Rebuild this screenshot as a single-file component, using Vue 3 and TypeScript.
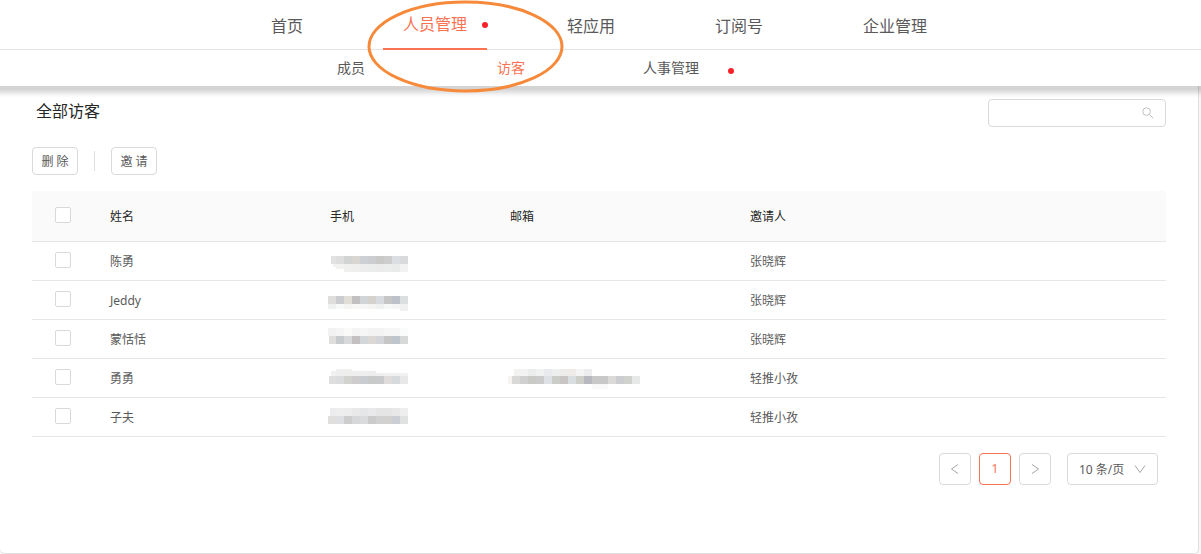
<script setup lang="ts">
import { computed, ref } from 'vue'

interface NavItem {
  label: string
  active?: boolean
  dot?: boolean
}

interface MosaicCell {
  x: number
  y: number
  width: number
  height: number
  color: string
}

interface Visitor {
  id: number
  name: string
  phone: MosaicCell[]
  email: MosaicCell[]
  inviter: string
}

const CELL = 8

const mainNav: NavItem[] = [
  { label: '首页' },
  { label: '人员管理', active: true, dot: true },
  { label: '轻应用' },
  { label: '订阅号' },
  { label: '企业管理' },
]

const subNav: NavItem[] = [
  { label: '成员' },
  { label: '访客', active: true },
  { label: '人事管理', dot: true },
]

// One row of mosaic cells; `inset` shortens the first cell from the left.
function strip(x: number, y: number, height: number, colors: string, inset = 0): MosaicCell[] {
  return colors.split(' ').map((c, i) => ({
    x: x + i * CELL + (i === 0 ? inset : 0),
    y,
    width: CELL - (i === 0 ? inset : 0),
    height,
    color: '#' + c,
  }))
}

const visitors: Visitor[] = [
  {
    id: 1,
    name: '陈勇',
    phone: [
      ...strip(14, 14, 8, 'e2e2e3 dededf d2d3d3 d9d6d1 cdd0d5 cbcdd0 c9c9c8 cdcdcd dbdfe4 d9dadb', 3),
      ...strip(14, 22, 3, 'f2f2f1', 5),
      ...strip(22, 22, 5, 'f2f2f1'),
      ...strip(30, 22, 8, 'f0f0ee efefed ededed ebecec ebebec ebecec e9eaea f2f2f3'),
    ],
    email: [],
    inviter: '张晓辉',
  },
  {
    id: 2,
    name: 'Jeddy',
    phone: [
      ...strip(14, 15, 8, 'dfdedd cacccf e1ded8 c3c0c2 d2d5d7 d5d2ce d8dce0 c7c6c6 bdc1ca dcdfdf'),
      ...strip(14, 23, 5, 'eff0f0 f7f9f8 f4f4f2 f7f7f5 f7f6f6 f4f4f3 eff1f1 f6f7f7 f5f5f6'),
      ...strip(86, 23, 7, 'f0f0f1'),
    ],
    email: [],
    inviter: '张晓辉',
  },
  {
    id: 3,
    name: '蒙恬恬',
    phone: [
      ...strip(14, 8, 8, 'f2f2f2 f5f5f5 fafaf8 f4f4f4 f6f6f6 f3f3f3 f3f3f4 f6f6f6 f6f6f7 fafbfb'),
      ...strip(14, 16, 8, 'e0dddd c7cbce d7d9da c4c0c2 d3d7da dcd8d5 d4d5da c7c6c6 bec5cc d7d9d9', 1),
    ],
    email: [],
    inviter: '张晓辉',
  },
  {
    id: 4,
    name: '勇勇',
    phone: [
      ...strip(14, 12, 5, 'f0f0f0', 3),
      ...strip(22, 10, 7, 'eeeeee eeeeed'),
      ...strip(38, 12, 5, 'eeeeee eeeeef ededee'),
      ...strip(62, 14, 3, 'efeff0 f0f0f0 f0f0f1 f1f1f1'),
      ...strip(14, 17, 8, 'dededf dadcde d2d2cf cfcccd c9cdd1 c8caca c9cacc e0dcdc d6dadd e8e8e9', 1),
    ],
    email: [
      ...strip(18, 10, 7, 'f2f2f1 f3f3f4 ebedec f0f1f1 e8eaed edefee eeecea eeebe9 f5f4f4 ededef', 2),
      ...strip(10, 17, 8, 'f5f4f3', 4),
      ...strip(18, 17, 8, 'd9d9d8 d0d0d1 c9cac6 cbcbcb dee2e7 cbcdc9 c9c5c5 d9dee0 cfcfca b8b9c0 c8c8c8 c8c8c8 dcdad9 cbcdd1 d0d2ce e6e9e8'),
      ...strip(98, 25, 5, 'f9f9f9 f9f9f9'),
    ],
    inviter: '轻推小孜',
  },
  {
    id: 5,
    name: '子夫',
    phone: [
      ...strip(14, 10, 8, 'ececee eeeeef ededed e9e9ea e5e6e7 e9e9eb e5e5e6 e5e5e6 e8e8e9 eeeeee', 2),
      ...strip(14, 18, 8, 'e1dfde dddfe2 cdcdcd d7d8d9 dadbdc cccbcc d1d1d1 d2d1d0 ccced6 e0e2e2'),
    ],
    email: [],
    inviter: '轻推小孜',
  },
]

const keyword = ref('')
const pageSize = ref('10')
const selected = ref<number[]>([])

const allSelected = computed({
  get: () => selected.value.length === visitors.length,
  set: (on: boolean) => {
    selected.value = on ? visitors.map((v) => v.id) : []
  },
})
</script>

<template>
  <div class="page">
    <header class="header">
      <nav class="main-nav" aria-label="主导航">
        <ul class="nav-list">
          <li v-for="item in mainNav" :key="item.label" class="nav-item" :class="{ active: item.active }">
            <a href="#" class="nav-link">{{ item.label }}</a>
            <span v-if="item.dot" class="dot"></span>
            <svg v-if="item.active" class="ring" width="198" height="94" viewBox="0 0 198 94" aria-hidden="true">
              <ellipse cx="98.5" cy="46.5" rx="96.5" ry="44.5" fill="none" stroke="#f68a3a" stroke-width="3" />
            </svg>
          </li>
        </ul>
      </nav>
      <nav class="sub-nav" aria-label="子导航">
        <ul class="sub-list">
          <li v-for="item in subNav" :key="item.label" class="sub-item" :class="{ active: item.active }">
            <a href="#" class="sub-link">{{ item.label }}</a>
            <span v-if="item.dot" class="dot"></span>
          </li>
        </ul>
      </nav>
    </header>

    <main class="panel">
      <div class="title-row">
        <h1 class="title">全部访客</h1>
        <label class="search">
          <input v-model="keyword" type="text" class="search-input" aria-label="搜索访客" />
          <svg class="search-icon" width="12" height="12" viewBox="0 0 12 12" aria-hidden="true">
            <circle cx="4.6" cy="4.6" r="3.8" />
            <path d="M7.4 7.4 11.3 11.3" />
          </svg>
        </label>
      </div>

      <div class="actions">
        <button type="button" class="btn">删 除</button>
        <span class="divider"></span>
        <button type="button" class="btn">邀 请</button>
      </div>

      <table class="table">
        <colgroup>
          <col class="col-check" />
          <col class="col-name" />
          <col class="col-phone" />
          <col class="col-email" />
          <col />
        </colgroup>
        <thead>
          <tr>
            <th class="check"><input v-model="allSelected" type="checkbox" class="checkbox" aria-label="全选" /></th>
            <th>姓名</th>
            <th>手机</th>
            <th>邮箱</th>
            <th>邀请人</th>
          </tr>
        </thead>
        <tbody>
          <tr v-for="v in visitors" :key="v.id">
            <td class="check">
              <input v-model="selected" type="checkbox" class="checkbox" :value="v.id" :aria-label="'选择' + v.name" />
            </td>
            <td>{{ v.name }}</td>
            <td v-for="(cells, col) in [v.phone, v.email]" :key="col" class="masked">
              <svg v-if="cells.length" class="mosaic" height="38" shape-rendering="crispEdges" aria-hidden="true">
                <rect
                  v-for="(cell, i) in cells"
                  :key="i"
                  :x="cell.x"
                  :y="cell.y"
                  :width="cell.width"
                  :height="cell.height"
                  :fill="cell.color"
                />
              </svg>
            </td>
            <td>{{ v.inviter }}</td>
          </tr>
        </tbody>
      </table>

      <div class="pagination">
        <button type="button" class="page-btn" aria-label="上一页">
          <svg class="arrow" width="12" height="12" viewBox="0 0 12 12" aria-hidden="true"><path d="M9 1.5 2.5 6 9 10.5" /></svg>
        </button>
        <button type="button" class="page-btn current">1</button>
        <button type="button" class="page-btn" aria-label="下一页">
          <svg class="arrow" width="12" height="12" viewBox="0 0 12 12" aria-hidden="true"><path d="M3 1.5 9.5 6 3 10.5" /></svg>
        </button>
        <label class="size">
          <select v-model="pageSize" class="size-select" aria-label="每页条数">
            <option value="10">10 条/页</option>
            <option value="20">20 条/页</option>
          </select>
          <svg class="size-arrow" width="12" height="12" viewBox="0 0 12 12" aria-hidden="true"><path d="M1 2.5 6 9.5 11 2.5" /></svg>
        </label>
      </div>
    </main>
  </div>
</template>

<style>
body {
  background: #f7f7f7;
}
</style>

<style scoped>
.page {
  display: flex;
  flex-direction: column;
  min-height: 100vh;
  box-sizing: border-box;
  font-family: "Noto Sans", "Noto Sans CJK SC", sans-serif;
  font-size: 12px;
  line-height: 18px;
  color: #595959;
}

.header {
  position: relative;
  z-index: 1;
  background: #fff;
}

.header::after {
  content: "";
  position: absolute;
  top: 100%;
  left: 0;
  right: 0;
  height: 12px;
  background: linear-gradient(rgba(0, 0, 0, 0.17) 3px, rgba(0, 0, 0, 0.11) 6px, rgba(0, 0, 0, 0.03) 9px, transparent);
  pointer-events: none;
}

.main-nav {
  padding-right: 3px;
  border-bottom: 1px solid #e5e5e5;
}

.nav-list,
.sub-list {
  display: flex;
  width: 696px;
  margin: 0 auto;
  padding: 0;
  list-style: none;
}

.nav-list {
  justify-content: space-between;
  height: 49px;
}

.nav-item {
  position: relative;
  padding: 0 20px;
  font-size: 16px;
  line-height: 52px;
}

.nav-link,
.sub-link {
  color: inherit;
  text-decoration: none;
}

.nav-item.active {
  height: 48px;
  border-bottom: 2px solid #fa7252;
  line-height: 48px;
  color: #fa7252;
}

.dot {
  position: absolute;
  width: 6px;
  height: 6px;
  border-radius: 50%;
  background: #f8222b;
}

.nav-item .dot {
  top: 22px;
  right: -1px;
}

.ring {
  position: absolute;
  top: 0;
  left: -16px;
  z-index: 2;
  pointer-events: none;
}

.sub-nav {
  padding-right: 3px;
}

.sub-list {
  box-sizing: border-box;
  padding-left: 20px;
}

.sub-item {
  position: relative;
  width: 160px;
  font-size: 14px;
  line-height: 36px;
  text-align: center;
}

.sub-item.active {
  color: #fa7252;
}

.sub-item .dot {
  top: 18px;
  right: 17px;
}

.panel {
  flex: 1;
  margin-right: 2px;
  padding: 13px 32px 16px;
  border: 1px solid #dedede;
  border-width: 0 1px 1px 0;
  border-radius: 0 0 5px 5px;
  background: #fff;
}

.title-row {
  display: flex;
  justify-content: space-between;
}

.title {
  margin: 0 4px;
  font-size: 16px;
  font-weight: 400;
  line-height: 24px;
  color: #262626;
}

.search {
  display: flex;
  align-items: center;
  box-sizing: border-box;
  width: 178px;
  height: 28px;
  padding: 0 11px 0 8px;
  border: 1px solid #d9d9d9;
  border-radius: 4px;
}

.search-input {
  flex: 1;
  min-width: 0;
  padding: 0;
  border: 0;
  outline: 0;
  background: transparent;
  font: inherit;
  color: inherit;
}

.search-icon {
  fill: none;
  stroke: #c0c0c0;
}

.actions {
  display: flex;
  align-items: center;
  gap: 16px;
  margin: 20px 0 16px;
}

.btn {
  box-sizing: border-box;
  min-width: 46px;
  height: 28px;
  padding: 2px 8px 0;
  border: 1px solid #d9d9d9;
  border-radius: 4px;
  background: #fff;
  font: inherit;
  color: #595959;
}

.divider {
  width: 1px;
  height: 20px;
  background: #dedede;
}

.table {
  width: 100%;
  table-layout: fixed;
  border-collapse: separate;
  border-spacing: 0;
}

.col-check {
  width: 62px;
}

.col-name {
  width: 220px;
}

.col-phone {
  width: 180px;
}

.col-email {
  width: 240px;
}

.table th,
.table td {
  box-sizing: border-box;
  height: 39px;
  padding: 2px 16px 0;
  border-bottom: 1px solid #e6e6e6;
  text-align: left;
}

.table th {
  height: 51px;
  background: #fafafa;
  font-weight: 400;
  color: #262626;
}

.table th:first-child {
  border-top-left-radius: 4px;
}

.table th:last-child {
  border-top-right-radius: 4px;
}

.table .check {
  padding: 0;
  line-height: 0;
  text-align: center;
}

.table .masked {
  padding: 0;
}

.mosaic {
  display: block;
  width: 100%;
}

.checkbox {
  appearance: none;
  box-sizing: border-box;
  width: 16px;
  height: 16px;
  margin: 0 0 2px;
  border: 1px solid #d9d9d9;
  border-radius: 2px;
  background: #fff;
  vertical-align: middle;
}

.checkbox:checked {
  border-color: #fa7252;
  background: #fa7252;
}

.pagination {
  display: flex;
  justify-content: flex-end;
  gap: 8px;
  margin: 16px 8px 0 0;
}

.page-btn {
  display: flex;
  align-items: center;
  justify-content: center;
  box-sizing: border-box;
  width: 32px;
  height: 32px;
  padding: 0;
  border: 1px solid #d9d9d9;
  border-radius: 4px;
  background: #fff;
  font: inherit;
  color: #595959;
}

.page-btn.current {
  border-color: #fa7252;
  color: #fa7252;
}

.arrow,
.size-arrow {
  fill: none;
  stroke: #a6a6a6;
}

.size {
  display: grid;
  align-items: center;
  box-sizing: border-box;
  width: 91px;
  height: 32px;
  margin-left: 8px;
  border: 1px solid #d9d9d9;
  border-radius: 4px;
}

.size-select,
.size-arrow {
  grid-area: 1 / 1;
}

.size-select {
  appearance: none;
  width: 100%;
  height: 30px;
  padding: 2px 24px 0 11px;
  border: 0;
  outline: 0;
  background: transparent;
  font: inherit;
  color: #595959;
}

.size-arrow {
  justify-self: end;
  margin-right: 11px;
  pointer-events: none;
}
</style>
